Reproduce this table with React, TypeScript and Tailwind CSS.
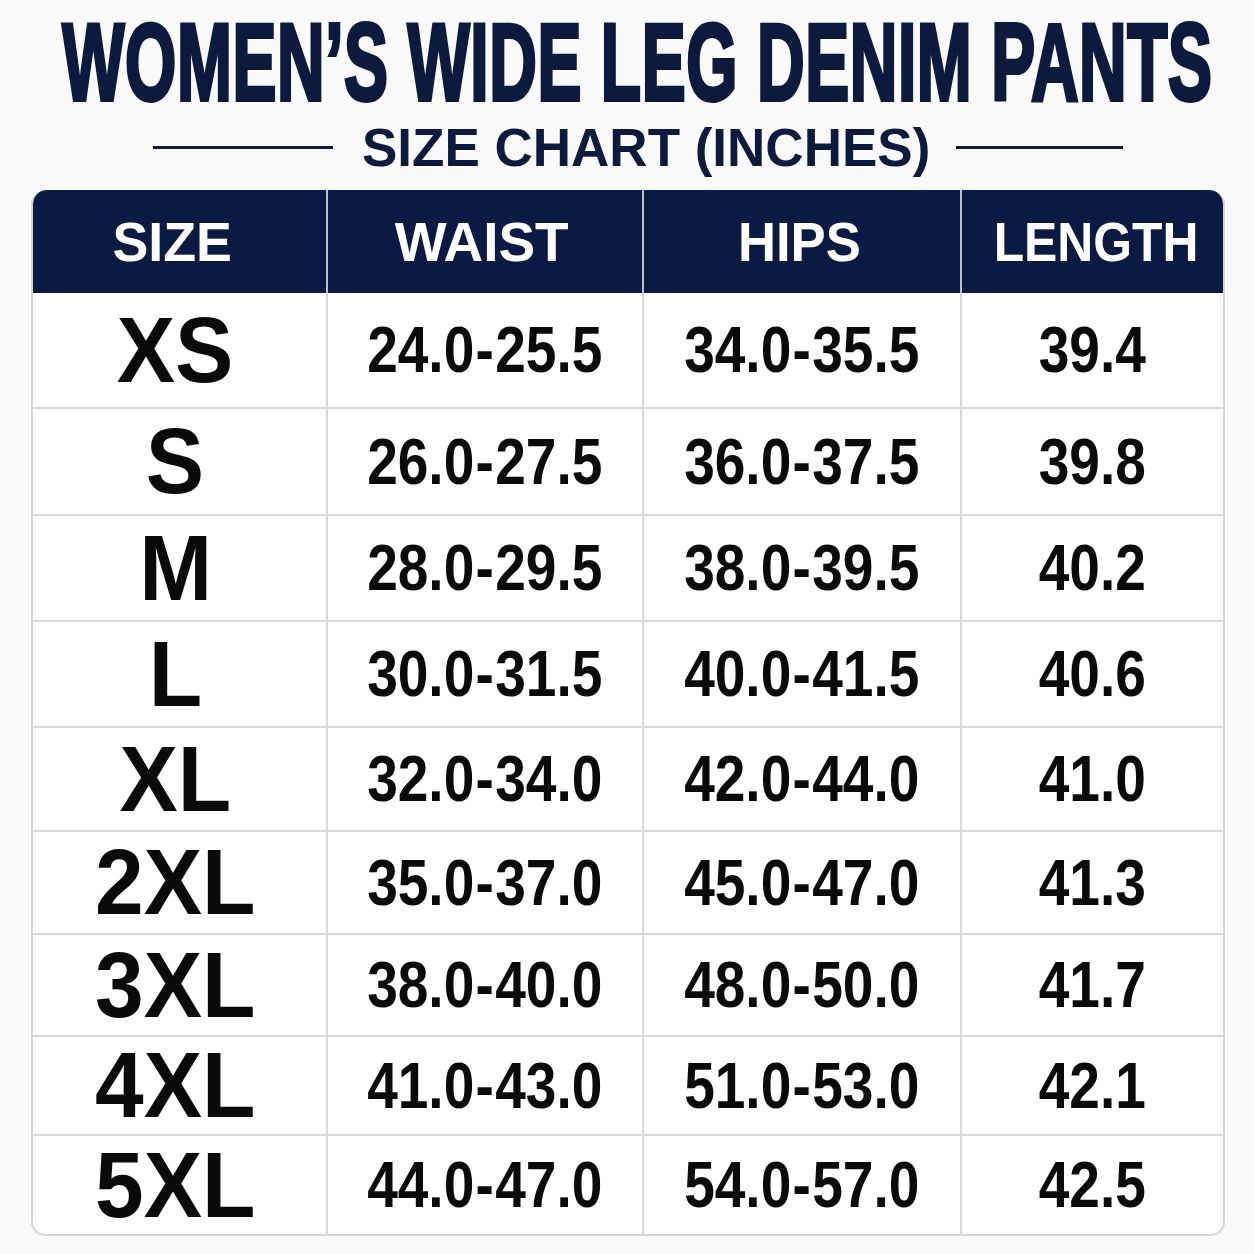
import React from "react";

const rows = [
  { s: "XS", w: "24.0-25.5", h: "34.0-35.5", l: "39.4", cls: "h-[114px]" },
  { s: "S", w: "26.0-27.5", h: "36.0-37.5", l: "39.8", cls: "h-[107px]" },
  { s: "M", w: "28.0-29.5", h: "38.0-39.5", l: "40.2", cls: "h-[106px]" },
  { s: "L", w: "30.0-31.5", h: "40.0-41.5", l: "40.6", cls: "h-[106px]" },
  { s: "XL", w: "32.0-34.0", h: "42.0-44.0", l: "41.0", cls: "h-[104px]" },
  { s: "2XL", w: "35.0-37.0", h: "45.0-47.0", l: "41.3", cls: "h-[103px]" },
  { s: "3XL", w: "38.0-40.0", h: "48.0-50.0", l: "41.7", cls: "h-[102px]" },
  { s: "4XL", w: "41.0-43.0", h: "51.0-53.0", l: "42.1", cls: "h-[99px]" },
  { s: "5XL", w: "44.0-47.0", h: "54.0-57.0", l: "42.5", cls: "h-[100px]" },
];

const headers = [
  { t: "SIZE", cell: "pr-[14px]", sc: "scale-x-[0.96]" },
  { t: "WAIST", cell: "pr-[7px]", sc: "scale-x-[0.98]" },
  { t: "HIPS", cell: "pr-[5px]", sc: "scale-x-[0.94]" },
  { t: "LENGTH", cell: "pl-[7px]", sc: "scale-x-[0.89]" },
];

const font = { fontFamily: '"Liberation Sans", Arial, sans-serif' };

function Num({ v }: { v: string }) {
  const parts = v.split("-");
  return (
    <span className="inline-block text-[64px] font-bold leading-none text-[#0a0a0a] scale-x-[0.86] origin-center whitespace-nowrap">
      {parts.length === 2 ? (
        <>
          {parts[0]}
          <span className="mx-[1.5px]">-</span>
          {parts[1]}
        </>
      ) : (
        v
      )}
    </span>
  );
}

export default function App() {
  return (
    <div
      className="w-[1254px] h-[1254px] bg-[#fafafa] flex flex-col items-stretch pt-[7px] overflow-hidden"
      style={font}
    >
      <div className="h-[110px] flex items-center justify-center pl-[21px]">
        <span className="inline-block h-[66px] text-[65.9px] leading-[66px] font-bold text-[#0b1a3d] whitespace-nowrap scale-y-[1.667] origin-center [-webkit-text-stroke:2.4px_#0b1a3d] tracking-[0.6px]">
          WOMEN’S WIDE LEG DENIM PANTS
        </span>
      </div>
      <div className="mt-[4px] h-[53px] flex items-center pl-[153px]">
        <div className="w-[180px] h-[3px] bg-[#0b1a3d]" />
        <div className="ml-[29px] text-[53px] leading-[53px] font-bold text-[#0b1a3d] whitespace-nowrap">
          SIZE CHART (INCHES)
        </div>
        <div className="ml-[26px] w-[167px] h-[3px] bg-[#0b1a3d]" />
      </div>
      <div className="mt-[16px] mx-[31px] w-[1194px] rounded-[14px] border-2 border-[#d6d6d6] border-t-0 bg-white overflow-hidden">
        <div className="grid grid-cols-[293px_316px_318px_1fr] h-[103px] bg-[#0a1a42] rounded-t-[14px]">
          {headers.map((h, i) => (
            <div
              key={h.t}
              className={
                "flex items-center justify-center text-[56px] font-bold text-white leading-none " +
                h.cell +
                (i > 0 ? " border-l-2 border-[#b9bfcc]" : "")
              }
            >
              <span className={"inline-block origin-center " + h.sc}>{h.t}</span>
            </div>
          ))}
        </div>
        {rows.map((r, idx) => (
          <div
            key={r.s}
            className={
              "grid grid-cols-[293px_316px_318px_1fr] " +
              r.cls +
              (idx > 0 ? " border-t-2 border-[#d9d9d9]" : "")
            }
          >
            <div className="flex items-center justify-center pr-[8px]">
              <span className="inline-block text-[93px] font-bold leading-none text-[#0a0a0a] scale-x-[0.94] origin-center">
                {r.s}
              </span>
            </div>
            <div className="flex items-center justify-center border-l-2 border-[#d9d9d9]">
              <Num v={r.w} />
            </div>
            <div className="flex items-center justify-center border-l-2 border-[#d9d9d9]">
              <Num v={r.h} />
            </div>
            <div className="flex items-center justify-center border-l-2 border-[#d9d9d9]">
              <Num v={r.l} />
            </div>
          </div>
        ))}
      </div>
    </div>
  );
}
